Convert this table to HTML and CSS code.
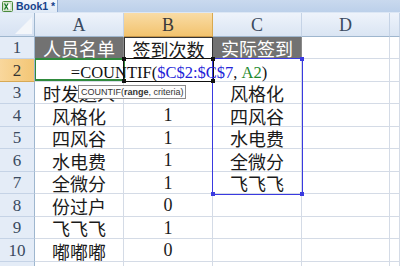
FILE: index.html
```html
<!DOCTYPE html>
<html lang="zh-CN">
<head>
<meta charset="utf-8">
<title>Book1</title>
<link rel="stylesheet" href="styles.css">
</head>
<body>
<div class="tabbar">
  <div class="tab">
    <svg class="xl-icon" width="11" height="11" viewBox="0 0 11 11">
      <rect x="0.5" y="0.5" width="10" height="10" rx="1" fill="#eaf3e4" stroke="#4a8a3c"/>
      <rect x="2" y="2" width="7" height="7" fill="#fff" stroke="#8fb884" stroke-width="0.6"/>
      <path d="M2.5 2.5 L6 8.5 M6 2.5 L2.5 8.5" stroke="#1e7a2e" stroke-width="1.4"/>
    </svg>
    <span class="tab-title">Book1 *</span>
  </div>
</div>
<div class="sheet">
  <div class="corner"><span class="corner-tri"></span></div>
  <div class="colhead">A</div>
  <div class="colhead sel">B</div>
  <div class="colhead">C</div>
  <div class="colhead">D</div>
  <div class="colhead"></div>

  <div class="rowhead">1</div>
  <div class="cell fill">人员名单</div>
  <div class="cell boxed">签到次数</div>
  <div class="cell fill">实际签到</div>
  <div class="cell"></div><div class="cell"></div>

  <div class="rowhead sel">2</div>
  <div class="cell"></div><div class="cell"></div><div class="cell"></div>
  <div class="cell"></div><div class="cell"></div>

  <div class="rowhead">3</div>
  <div class="cell">时发送人</div><div class="cell num">0</div><div class="cell">风格化</div>
  <div class="cell"></div><div class="cell"></div>

  <div class="rowhead">4</div>
  <div class="cell">风格化</div><div class="cell num">1</div><div class="cell">四风谷</div>
  <div class="cell"></div><div class="cell"></div>

  <div class="rowhead">5</div>
  <div class="cell">四风谷</div><div class="cell num">1</div><div class="cell">水电费</div>
  <div class="cell"></div><div class="cell"></div>

  <div class="rowhead">6</div>
  <div class="cell">水电费</div><div class="cell num">1</div><div class="cell">全微分</div>
  <div class="cell"></div><div class="cell"></div>

  <div class="rowhead">7</div>
  <div class="cell">全微分</div><div class="cell num">1</div><div class="cell">飞飞飞</div>
  <div class="cell"></div><div class="cell"></div>

  <div class="rowhead">8</div>
  <div class="cell">份过户</div><div class="cell num">0</div><div class="cell"></div>
  <div class="cell"></div><div class="cell"></div>

  <div class="rowhead">9</div>
  <div class="cell">飞飞飞</div><div class="cell num">1</div><div class="cell"></div>
  <div class="cell"></div><div class="cell"></div>

  <div class="rowhead">10</div>
  <div class="cell">嘟嘟嘟</div><div class="cell num">0</div><div class="cell"></div>
  <div class="cell"></div><div class="cell"></div>

  <div class="rowhead stub"></div>
  <div class="cell stub"></div><div class="cell stub"></div><div class="cell stub"></div>
  <div class="cell stub"></div><div class="cell stub"></div>

  <div class="ref-a2"></div>
  <div class="ref-c">
    <i class="h tl"></i><i class="h tr"></i><i class="h bl"></i><i class="h br"></i>
  </div>
  <div class="active-b2"><i class="h tl"></i><i class="h bl"></i><i class="h tr"></i><i class="h br"></i></div>
  <div class="editor"><span>=COUNTIF(</span><span class="blue">$C$2:$C$7</span><span>, </span><span class="green">A2</span><span>)</span></div>
  <div class="tooltip">COUNTIF(<b>range</b>, criteria)</div>
</div>
</body>
</html>
```
FILE: styles.css
```css
* { box-sizing: border-box; }
html, body {
  margin: 0;
  padding: 0;
  width: 400px;
  height: 266px;
  overflow: hidden;
  background: #ffffff;
}
.tabbar {
  height: 13px;
  background: linear-gradient(#c9d9ee, #bcd0ea);
  border-bottom: 1px solid #dce7f5;
  display: flex;
  align-items: flex-start;
}
.tab {
  height: 12px;
  width: 58px;
  display: flex;
  align-items: center;
  gap: 3px;
  padding-left: 2px;
  background: linear-gradient(#f4f8fd, #dfe9f6);
  border-right: 1px solid #8ea9cf;
}
.xl-icon { display: block; flex: none; }
.tab-title {
  font-family: "Liberation Sans", "DejaVu Sans", sans-serif;
  font-weight: bold;
  font-size: 10.5px;
  color: #15428b;
  line-height: 12px;
}
.sheet {
  position: relative;
  display: grid;
  grid-template-columns: 35px 89px 89px 89px 88px 10px;
  grid-template-rows: 24px repeat(5, 22px 23px) 4px;
  font-family: "Liberation Serif", "Noto Sans CJK SC", serif;
  color: #222;
}
.corner {
  position: relative;
  background: linear-gradient(#e6eef9, #d6e2f2);
  border-right: 1px solid #9eb6ce;
  border-bottom: 1px solid #9eb6ce;
}
.corner-tri {
  position: absolute;
  right: 2px;
  bottom: 2px;
  width: 0;
  height: 0;
  border-left: 17px solid transparent;
  border-bottom: 17px solid #f3f6fa;
}
.colhead {
  display: flex;
  align-items: center;
  justify-content: center;
  font-size: 18px;
  color: #3a4a60;
  background: linear-gradient(#eef3fb, #dae5f3);
  border-right: 1px solid #c5d3e6;
  border-bottom: 1px solid #9eb6ce;
  padding-top: 1px;
}
.colhead.sel {
  background: linear-gradient(#f9dca6, #f2c36e);
  border-right-color: #d9a94f;
  border-bottom-color: #c4954a;
  color: #3a3a3a;
}
.rowhead {
  display: flex;
  align-items: center;
  justify-content: center;
  font-size: 17px;
  color: #3a4a60;
  background: #e4ecf7;
  border-right: 1px solid #9eb6ce;
  border-bottom: 1px solid #c5d3e6;
  padding-top: 1px;
}
.rowhead.sel {
  background: linear-gradient(90deg, #f9d79c, #f3c675);
  border-bottom-color: #d7a955;
  color: #333;
}
.cell {
  display: flex;
  align-items: center;
  justify-content: center;
  font-size: 18px;
  color: #1a1a1a;
  border-right: 1px solid #d4dbe6;
  border-bottom: 1px solid #d4dbe6;
  white-space: nowrap;
  overflow: hidden;
  padding-top: 1px;
}
.stub { padding: 0; border-bottom: 0; }
.cell.num { font-size: 18px; }
.cell.fill {
  background: #727272;
  color: #ffffff;
  border-color: #8a8a8a;
}
.cell.boxed {
  border-top: 1px solid #333;
  border-left: 1px solid #333;
  border-right: 1px solid #333;
}
.ref-a2 {
  position: absolute;
  left: 35px;
  top: 45px;
  width: 90px;
  height: 23px;
  border: 2px solid #2f8a3c;
  border-left-width: 1px;
}
.ref-c {
  position: absolute;
  left: 212px;
  top: 45px;
  width: 91px;
  height: 137px;
  border: 1px solid #3a3ae0;
}
.ref-c .h, .active-b2 .h {
  position: absolute;
  width: 4px;
  height: 4px;
  background: #3a3ae0;
}
.active-b2 .h { background: #111; }
.h.tl { left: -2px; top: -2px; }
.h.tr { right: -2px; top: -2px; }
.h.bl { left: -2px; bottom: -2px; }
.h.br { right: -2px; bottom: -2px; }
.active-b2 {
  position: absolute;
  left: 123px;
  top: 45px;
  width: 91px;
  height: 24px;
  border: 1px solid #111;
}
.editor {
  position: absolute;
  left: 62px;
  top: 49px;
  width: 214px;
  height: 20px;
  display: flex;
  justify-content: center;
  align-items: flex-end;
  font-family: "Liberation Serif", serif;
  font-size: 16.5px;
  line-height: 18px;
  color: #111;
  white-space: pre;
}
.editor .blue { color: #2323d8; }
.editor .green { color: #1d8a2e; }
.tooltip {
  position: absolute;
  left: 78px;
  top: 72px;
  width: 108px;
  height: 14px;
  background: #fdfdfd;
  border: 1px solid #8c8c8c;
  font-family: "Liberation Sans", "DejaVu Sans", sans-serif;
  font-size: 9px;
  line-height: 12px;
  color: #333;
  padding-left: 2px;
  white-space: nowrap;
}
.tooltip b { font-weight: bold; }
```
